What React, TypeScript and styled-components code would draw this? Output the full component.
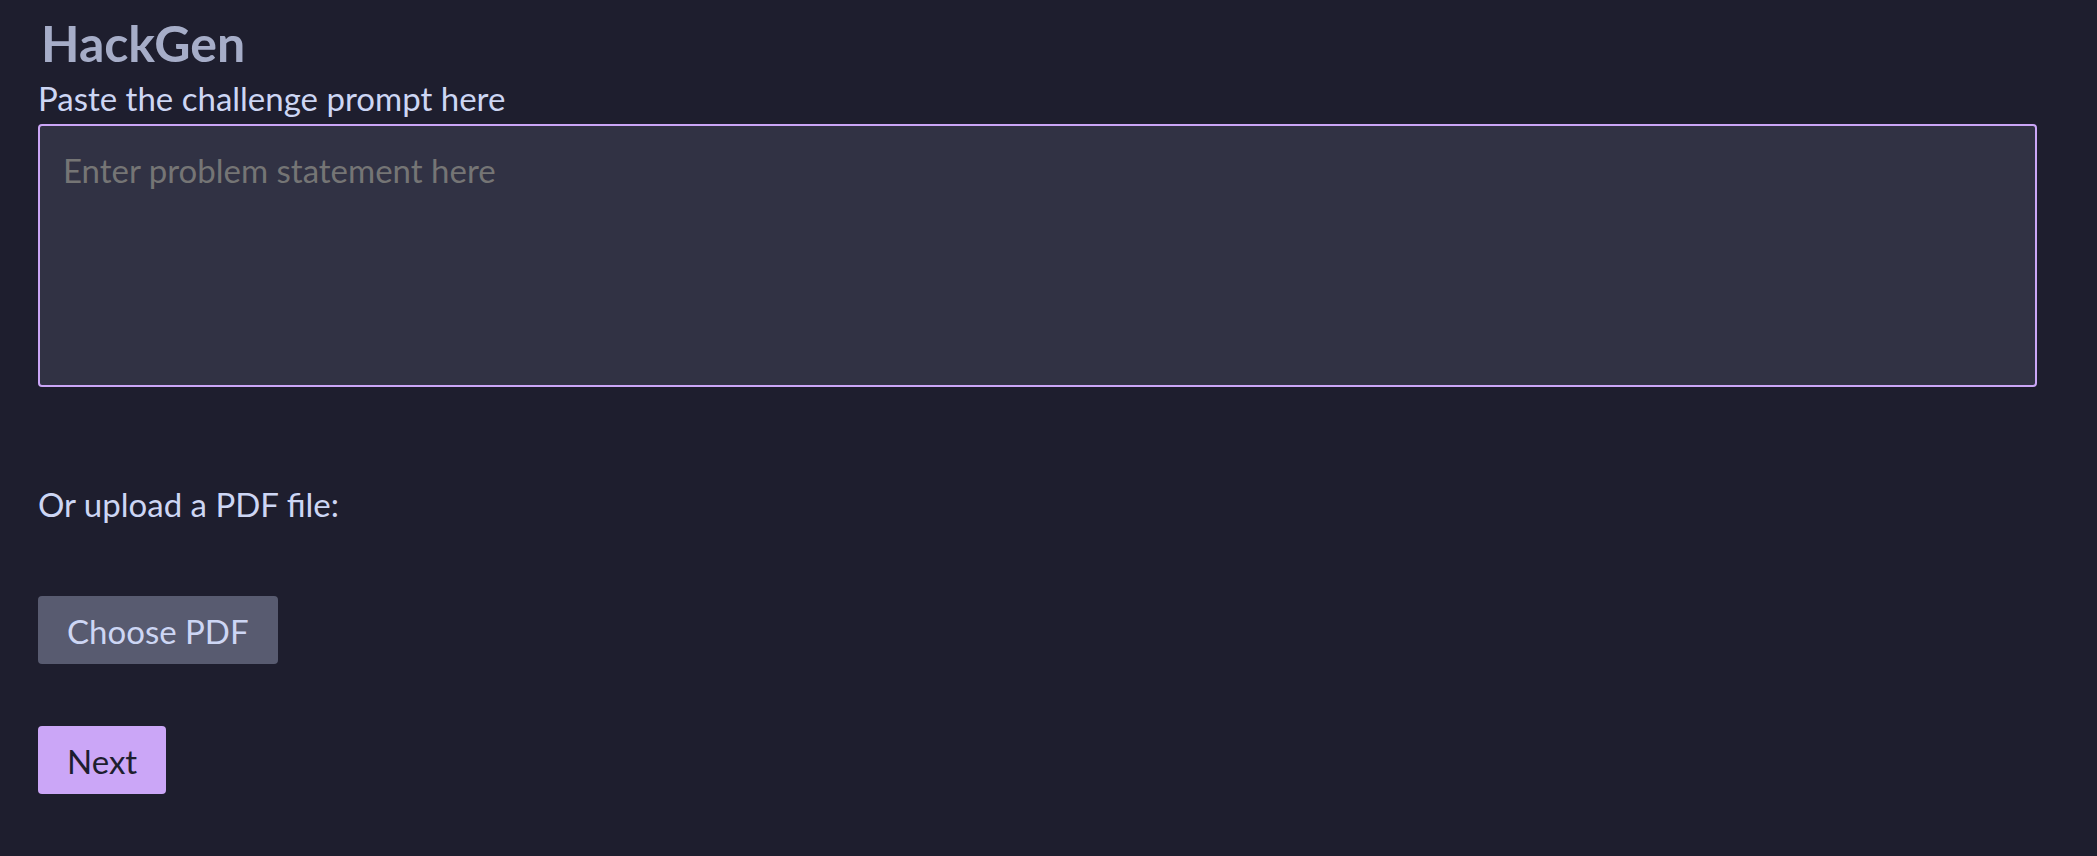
import styled, { createGlobalStyle } from "styled-components";

const GlobalStyle = createGlobalStyle`
  html, body {
    margin: 0;
    background: #1e1e2e;
  }

  body {
    font-family: Lato, "Open Sans", sans-serif;
    color: #cdd6f4;
  }
`;

const Page = styled.main`
  display: flex;
  flex-direction: column;
  align-items: flex-start;
  padding: 15px 0 60px 38px;
  min-height: 856px;
  box-sizing: border-box;
`;

const Title = styled.h1`
  margin: 0 0 0 3px;
  font-size: 50px;
  line-height: 56px;
  font-weight: 700;
  color: #a6adc8;
`;

const Label = styled.label<{ $gap?: number }>`
  display: block;
  margin-top: ${({ $gap }) => $gap ?? 0}px;
  font-size: 33px;
  line-height: 40px;
  color: #cdd6f4;
`;

const PromptInput = styled.textarea`
  margin-top: 6px;
  width: 1999px;
  height: 263px;
  box-sizing: border-box;
  padding: 24px 23px;
  border: 2px solid #cba6f7;
  border-radius: 4px;
  background: #313244;
  color: #cdd6f4;
  font-family: inherit;
  font-size: 33px;
  line-height: 40px;
  resize: none;
  outline: none;

  &::placeholder {
    color: #757575;
  }
`;

const HiddenInput = styled.input`
  display: none;
`;

const Button = styled.button<{ $primary?: boolean; $gap: number }>`
  margin-top: ${({ $gap }) => $gap}px;
  padding: 15px 29px 13px;
  border: none;
  border-radius: 4px;
  background: ${({ $primary }) => ($primary ? "#cba6f7" : "#585b70")};
  color: ${({ $primary }) => ($primary ? "#1e1e2e" : "#cdd6f4")};
  font-family: inherit;
  font-size: 33px;
  line-height: 40px;
  cursor: pointer;
`;

export default function App() {
  return (
    <>
      <GlobalStyle />
      <Page>
        <Title>HackGen</Title>
        <Label $gap={7} htmlFor="prompt">
          Paste the challenge prompt here
        </Label>
        <PromptInput id="prompt" placeholder="Enter problem statement here" />
        <Label $gap={97} htmlFor="pdf">
          Or upload a PDF file:
        </Label>
        <HiddenInput id="pdf" type="file" accept="application/pdf" />
        <Button $gap={72}>Choose PDF</Button>
        <Button $primary $gap={62}>
          Next
        </Button>
      </Page>
    </>
  );
}
